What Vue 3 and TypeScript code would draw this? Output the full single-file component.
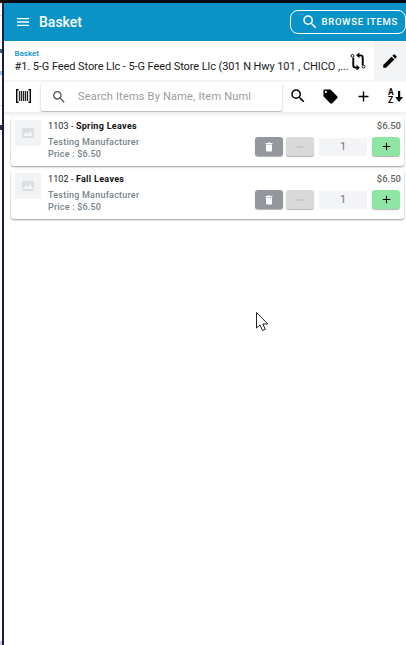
<script setup lang="ts">
interface Item { code: string; name: string; price: string }
const items: Item[] = [
  { code: '1103', name: 'Spring Leaves', price: '$6.50' },
  { code: '1102', name: 'Fall Leaves', price: '$6.50' },
]
</script>

<template>
  <div class="screen">
    <div class="topline"></div>
    <div class="body">
      <svg class="gutter" width="2" height="642" viewBox="0 0 2 642">
        <rect y="12" width="2" height="1" fill="#d8d8d8"/>
        <rect y="46" width="2" height="4" fill="#35627c"/>
        <rect y="68" width="2" height="4" fill="#8ccbe4"/>
        <rect y="102" width="2" height="1" fill="#d8d8d8"/>
        <rect y="122" width="2" height="5" fill="#333"/>
        <rect y="638" width="2" height="4" fill="#c9c9c9"/>
      </svg>
      <div class="edge"></div>
      <div class="main">
        <header class="appbar">
          <div class="appbar-left">
            <svg class="menu" width="16" height="16" viewBox="0 0 24 24"><path fill="#fff" d="M3 18h18v-2H3v2zm0-5h18v-2H3v2zm0-7v2h18V6H3z"/></svg>
            <span class="title">Basket</span>
          </div>
          <button class="browse">
            <svg width="18" height="18" viewBox="0 0 24 24"><path fill="#fff" d="M15.5 14h-.79l-.28-.27A6.47 6.47 0 0 0 16 9.5 6.5 6.5 0 1 0 9.5 16c1.61 0 3.09-.59 4.23-1.57l.27.28v.79l5 4.99L20.49 19l-4.99-5zm-6 0C7.01 14 5 11.99 5 9.5S7.01 5 9.5 5 14 7.01 14 9.5 11.99 14 9.5 14z"/></svg>
            <span>BROWSE ITEMS</span>
          </button>
        </header>

        <section class="basket-row">
          <div class="basket-info">
            <div class="basket-label">Basket</div>
            <div class="basket-value">#1. 5-G Feed Store Llc - 5-G Feed Store Llc (301 N Hwy 101 , CHICO ,...</div>
          </div>
          <svg class="swap" width="16" height="17" viewBox="0 0 16 18" fill="none" stroke="#000" stroke-width="2">
            <path d="M3 5v8c0 1.800.8 2.500 2.500 2.500H7"/>
            <path fill="#000" stroke="none" d="M6.500 12.500l3.500 3-3.500 3z"/>
            <path d="M13 13V5c0-1.800-.8-2.500-2.500-2.500H9"/>
            <path fill="#000" stroke="none" d="M9.500-.5l-3.500 3 3.500 3z"/>
            <circle cx="2.200" cy="3" r="1.500" stroke-width="1" fill="#fff"/>
            <circle cx="13.800" cy="14.500" r="1.500" stroke-width="1" fill="#fff"/>
          </svg>
          <div class="edit">
            <svg width="18" height="18" viewBox="0 0 24 24"><path fill="#000" d="M3 17.250V21h3.750L17.810 9.940l-3.750-3.750L3 17.250zM20.710 7.040a1 1 0 0 0 0-1.410l-2.340-2.340a1 1 0 0 0-1.410 0l-1.830 1.830 3.750 3.750 1.830-1.830z"/></svg>
          </div>
        </section>

        <section class="tools">
          <svg class="barcode" width="15" height="14" viewBox="0 0 15 14">
            <path fill="none" stroke="#000" stroke-width="1.400" d="M2.500.7H.7v12.600h1.800M12.500.7h1.800v12.600h-1.800"/>
            <path stroke="#222" stroke-width="1.300" d="M3.500 2v10M5.500 2v10M7.500 2v10M9.500 2v10M11.500 2v10"/>
          </svg>
          <div class="search">
            <svg width="16" height="16" viewBox="0 0 24 24"><path fill="#555" d="M15.500 14h-.79l-.28-.27A6.470 6.470 0 0 0 16 9.500 6.500 6.500 0 1 0 9.500 16c1.610 0 3.090-.59 4.230-1.570l.27.28v.79l5 4.990L20.490 19l-4.990-5zm-6 0C7.010 14 5 11.990 5 9.500S7.010 5 9.500 5 14 7.010 14 9.500 11.990 14 9.500 14z"/></svg>
            <span class="placeholder">Search Items By Name, Item Numl</span>
          </div>
          <div class="tool-icons">
            <svg width="18" height="18" viewBox="0 0 24 24"><path fill="#000" d="M15.500 14h-.79l-.28-.27A6.470 6.470 0 0 0 16 9.500 6.500 6.500 0 1 0 9.500 16c1.610 0 3.090-.59 4.230-1.570l.27.28v.79l5 4.990L20.490 19l-4.990-5zm-6 0C7.010 14 5 11.990 5 9.500S7.010 5 9.500 5 14 7.010 14 9.500 11.990 14 9.500 14z"/></svg>
            <svg width="17" height="17" viewBox="0 0 24 24"><path fill="#000" d="M21.410 11.580l-9-9A2 2 0 0 0 11 2H4a2 2 0 0 0-2 2v7c0 .55.220 1.050.590 1.420l9 9a2 2 0 0 0 2.820 0l7-7a2 2 0 0 0 0-2.840zM5.500 7A1.500 1.500 0 1 1 5.500 4a1.500 1.500 0 0 1 0 3z"/></svg>
            <svg width="17" height="17" viewBox="0 0 24 24"><path fill="#000" d="M19 13h-6v6h-2v-6H5v-2h6V5h2v6h6v2z"/></svg>
            <svg width="18" height="18" viewBox="0 0 18 18">
              <text x="1" y="7.500" class="az">A</text>
              <text x="1" y="15.500" class="az">Z</text>
              <path fill="#000" d="M11 4h2.200v6H16l-3.900 5-3.900-5H11z"/>
            </svg>
          </div>
        </section>

        <section class="list">
          <article v-for="item in items" :key="item.code" class="card">
            <div class="thumb">
              <svg width="12" height="10" viewBox="0 0 12 10"><rect width="12" height="10" fill="#dcdfe2"/><path fill="#f4f5f6" d="M1 8l3-4 2 2 2-3 3 5z"/></svg>
            </div>
            <div class="details">
              <div class="name">{{ item.code }} - <b>{{ item.name }}</b></div>
              <div class="maker">Testing Manufacturer</div>
              <div class="price">Price : {{ item.price }}</div>
            </div>
            <div class="actions">
              <div class="total">{{ item.price }}</div>
              <div class="controls">
                <button class="btn del">
                  <svg width="12" height="12" viewBox="0 0 24 24"><path fill="#fff" d="M6 19a2 2 0 0 0 2 2h8a2 2 0 0 0 2-2V7H6v12zM19 4h-3.500l-1-1h-5l-1 1H5v2h14V4z"/></svg>
                </button>
                <button class="btn minus">
                  <svg width="12" height="12" viewBox="0 0 24 24"><path fill="#b4b6b8" d="M19 13H5v-2h14v2z"/></svg>
                </button>
                <div class="qty">1</div>
                <button class="btn plus">
                  <svg width="13" height="13" viewBox="0 0 24 24"><path fill="#000" d="M19 13h-6v6h-2v-6H5v-2h6V5h2v6h6v2z"/></svg>
                </button>
              </div>
            </div>
          </article>
        </section>
      </div>
    </div>
    <svg class="cursor" width="14" height="20" viewBox="0 0 14 20">
      <path fill="#fff" stroke="#222" stroke-width="1" d="M.500.500v15.500l3.500-3 2.500 5.500 2.800-1.200-2.500-5.300h5z"/>
    </svg>
  </div>
</template>

<style>
html, body { margin: 0; background: #fff; }
</style>

<style scoped>
.screen {
  position: relative;
  width: 406px;
  height: 645px;
  overflow: hidden;
  display: flex;
  flex-direction: column;
  font-family: Roboto, "Liberation Sans", sans-serif;
  background: #fff;
}
.topline { height: 3px; background: #0b0b0f; flex: none; }
.body { flex: 1; display: flex; min-height: 0; }
.gutter { flex: none; display: block; }
.edge {
  width: 2px;
  background: #1a1a4a;
  flex: none;
}
.main { flex: 1; min-width: 0; display: flex; flex-direction: column; }
.appbar {
  height: 38px;
  flex: none;
  background: #0a93c7;
  display: flex;
  align-items: center;
  justify-content: space-between;
}
.appbar-left { display: flex; align-items: center; gap: 8px; padding-left: 11px; }
.menu { display: block; }
.title { color: #fff; font-size: 14px; font-weight: 500; }
.browse {
  width: 116px;
  height: 24px;
  margin-top: -1px;
  border: 1.500px solid #fff;
  border-radius: 8px;
  background: transparent;
  color: #fff;
  display: flex;
  align-items: center;
  gap: 3px;
  padding: 0 0 0 9.500px;
  font: 500 9.500px Roboto, sans-serif;
  letter-spacing: .7px;
  box-sizing: border-box;
}
.basket-row {
  height: 39px;
  flex: none;
  display: flex;
  align-items: center;
  box-shadow: 0 1px 2px rgba(0,0,0,.08);
  position: relative;
}
.basket-info { flex: 1; min-width: 0; padding-left: 10.500px; padding-top: 2px; }
.basket-label { font-size: 8px; color: #0a93c7; font-weight: 500; line-height: 10px; }
.basket-value { font-size: 11px; color: #1a1a1a; line-height: 15px; white-space: nowrap; letter-spacing: -.08px; }
.swap { flex: none; margin-right: 8px; margin-top: 2px; overflow: visible; }
.edit {
  width: 32px;
  height: 39px;
  flex: none;
  background: #f2f3f5;
  display: flex;
  align-items: center;
  justify-content: center;
  border-bottom-left-radius: 3px;
}
.tools {
  height: 32px;
  flex: none;
  display: flex;
  align-items: center;
}
.barcode { margin-left: 12px; margin-right: 10px; flex: none; }
.search {
  width: 241px;
  height: 28px;
  margin-top: 1px;
  flex: none;
  display: flex;
  align-items: center;
  gap: 11px;
  padding-left: 10px;
  box-sizing: border-box;
  box-shadow: 0 1px 2px rgba(0,0,0,.35);
  border-radius: 2px;
  overflow: hidden;
}
.placeholder { font-size: 11px; color: #9a9a9a; white-space: nowrap; letter-spacing: .2px; }
.tool-icons {
  flex: 1;
  display: flex;
  align-items: center;
  justify-content: space-between;
  padding: 0 1px 0 7px;
}
.az { font: 700 8.500px Roboto, sans-serif; fill: #000; }
.list {
  display: flex;
  flex-direction: column;
  gap: 4px;
  padding: 5px 2px 0 7px;
  background: linear-gradient(#ececec, #fff 5px);
}
.card {
  height: 49px;
  display: flex;
  background: #fff;
  border-radius: 3px;
  box-shadow: 0 1px 2px rgba(0,0,0,.4);
  padding: 3px 4px 0 4px;
  box-sizing: border-box;
}
.thumb {
  width: 26px;
  height: 26px;
  background: #f2f3f5;
  display: flex;
  align-items: center;
  justify-content: center;
  flex: none;
}
.details { margin-left: 7px; margin-top: 1px; flex: 1; min-width: 0; }
.name { font-size: 9px; line-height: 11px; color: #222; letter-spacing: .1px; }
.name b { font-weight: 700; color: #111; letter-spacing: .3px; }
.maker { margin-top: 4px; font-size: 9px; line-height: 12px; font-weight: 500; color: #77838a; letter-spacing: .23px; }
.price { font-size: 9px; line-height: 12px; font-weight: 500; color: #77838a; letter-spacing: .2px; }
.actions { display: flex; flex-direction: column; align-items: flex-end; }
.total { font-size: 9.500px; line-height: 11px; font-weight: 500; color: #666; margin-right: -1px; }
.controls { margin-top: 6px; display: flex; align-items: center; gap: 3px; }
.btn {
  width: 28px;
  height: 19px;
  border: none;
  padding: 0;
  border-radius: 3px;
  display: flex;
  align-items: center;
  justify-content: center;
  box-shadow: 0 1px 1px rgba(0,0,0,.3);
}
.del { background: #93969c; }
.minus { background: #d9d9d9; }
.plus { background: #8fe6a4; }
.qty {
  width: 48px;
  height: 18px;
  margin-left: 2px;
  margin-right: 2px;
  background: #f3f4f6;
  color: #777;
  font-size: 11px;
  display: flex;
  align-items: center;
  justify-content: center;
}
.cursor { position: absolute; left: 256px; top: 312px; }
</style>
